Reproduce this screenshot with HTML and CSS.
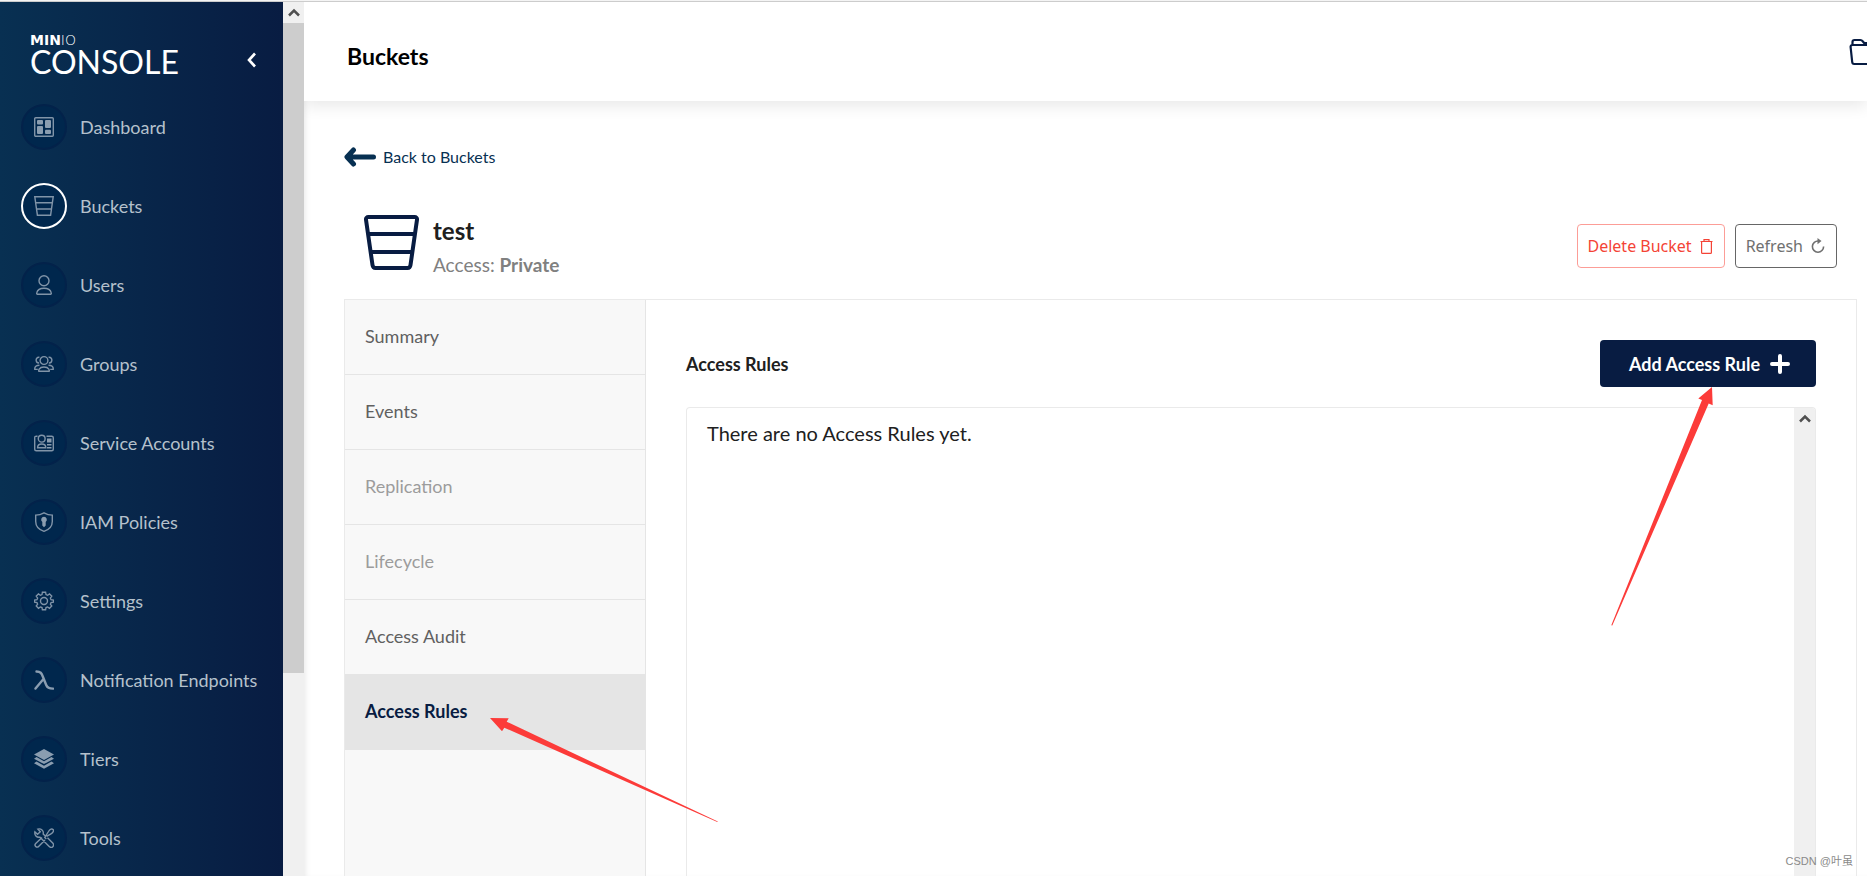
FILE: index.html
```html
<!DOCTYPE html>
<html lang="en">
<head>
<meta charset="utf-8">
<title>MinIO Console</title>
<link rel="stylesheet" href="styles.css">
</head>
<body>
<div class="app">
  <aside class="sidebar">
    <div class="brand">
      <div class="logo">
        <span class="logo-top"><b>MIN</b><span class="logo-thin">IO</span></span>
        <span class="logo-main">CONSOLE</span>
      </div>
      <button class="collapse" aria-label="Collapse menu"><svg width="10" height="16" viewBox="0 0 10 16"><path d="M8 1.500 2 8l6 6.500" fill="none" stroke="#fff" stroke-width="2.600"/></svg></button>
    </div>
    <nav class="menu">
      <a href="#" class="item"><span class="dot"><svg viewBox="0 0 20 20"><rect x=".7" y=".7" width="18.600" height="18.600" rx="1" class="ln"/><g class="fl"><rect x="3" y="3" width="6" height="4.500" rx="1"/><rect x="3" y="9" width="6" height="8" rx="1"/><rect x="11" y="3" width="6" height="8" rx="1"/><rect x="11" y="12.800" width="6" height="4.200" rx="1"/></g></svg></span>Dashboard</a>
      <a href="#" class="item current"><span class="dot"><svg viewBox="0 0 20 20"><path class="ln" d="M.8.800h18.400L16.600 19.200H3.400ZM1.600 6.700h16.800M2.500 13h15"/></svg></span>Buckets</a>
      <a href="#" class="item"><span class="dot"><svg viewBox="0 0 20 20"><circle cx="10" cy="5.700" r="5" class="ln"/><path class="ln" d="M3.200 19.200c-.6 0-.6-.8-.4-1.500.8-3.200 3.800-4.500 7.200-4.500s6.400 1.300 7.200 4.500c.2.700.2 1.500-.4 1.500Z"/></svg></span>Users</a>
      <a href="#" class="item"><span class="dot"><svg viewBox="0 0 20 20"><circle cx="10" cy="6.500" r="3.900" class="ln"/><path class="ln" d="M5 17.300c-.7 0-.5-4.300 5-4.300s5.700 4.300 5 4.300ZM5.400 3.300C3 3 1.900 5 2.200 6.700c.2 1.500 1.400 2.400 2.900 2.300M3.800 15.400H.8c-.3-2.700 1.500-4.200 4.700-4.200M14.600 3.300c2.400-.3 3.500 1.700 3.200 3.400-.2 1.500-1.400 2.400-2.900 2.300M16.200 15.400h3c.3-2.700-1.500-4.200-4.700-4.200"/></svg></span>Groups</a>
      <a href="#" class="item"><span class="dot"><svg viewBox="0 0 20 20"><path class="ln" d="M3.500 3.200H2.300C1.300 3.200.7 3.800.7 4.700v11.600c0 .9.600 1.500 1.600 1.500h15.400c1 0 1.600-.6 1.600-1.500V4.700c0-.9-.6-1.500-1.600-1.500h-5.200"/><circle cx="7.700" cy="5.700" r="3.400" class="ln"/><path class="ln" d="M3.600 14.800c0-5 8.200-5 8.200 0Z"/><path class="fl" d="M13 5.500h4.500v4H13zM13 11h4.500v1.500H13zM13 14h4.500v1.500H13z"/></svg></span>Service Accounts</a>
      <a href="#" class="item"><span class="dot"><svg viewBox="0 0 20 20"><path class="ln" d="M10 .8c2.600 1.500 5.400 2.300 8.300 2.300v6.300c0 4.600-3.400 8.200-8.300 9.900-4.900-1.700-8.300-5.300-8.300-9.900V3.100C4.600 3.100 7.400 2.300 10 .8Z"/><path class="fl" d="M10 4.800a2.900 2.900 0 0 1 1.700 5.200v3.500L10 15.200l-1.700-1.700V10A2.900 2.900 0 0 1 10 4.800Z"/></svg></span>IAM Policies</a>
      <a href="#" class="item"><span class="dot"><svg viewBox="0 0 20 20"><path class="ln" d="M8.300.8h3.400l.4 2.500 1.700.7 2-1.500 2.400 2.400-1.500 2 .7 1.700 2.500.4v2.200l-2.500.4-.7 1.700 1.500 2-2.400 2.400-2-1.500-1.700.7-.4 2.300H8.300l-.4-2.300-1.700-.7-2 1.500-2.400-2.400 1.500-2-.7-1.700L.1 11.200V9l2.500-.4.7-1.700-1.500-2 2.400-2.400 2 1.500 1.700-.7Z" transform="translate(.5 .5) scale(.95)"/><circle cx="10" cy="10" r="3.500" class="ln"/></svg></span>Settings</a>
      <a href="#" class="item"><span class="dot"><svg viewBox="0 0 20 20"><path class="thick" d="M2.500 1.500c4 0 5 1.500 6.500 5.500l3.200 8c1 2.600 2.800 3.600 6.800 3.600M9.500 9 1.500 18.600"/></svg></span>Notification Endpoints</a>
      <a href="#" class="item"><span class="dot"><svg viewBox="0 0 20 20"><path class="fl" d="M10 0 20 5.600 10 11 0 5.600Z"/><path class="fl" d="M2.500 8 0 9.700l10 5.400 10-5.400L17.500 8 10 12.200ZM2.500 12.500 0 14.200l10 5.600 10-5.600-2.500-1.700-7.500 4.200Z"/></svg></span>Tiers</a>
      <a href="#" class="item"><span class="dot"><svg viewBox="0 0 20 20"><path class="ln" d="m8 9.500-6.300 6a2 2 0 0 0 2.900 2.900L11 12M12.300 11l-1.500-1.500 3.700-6C16 .8 18 .5 19 1.500s.5 3-2 4.300l-4.400 2.600M13.500 9.800l5.200 5.300c2.400 2.500-1 5.900-3.500 3.400L6 9.200C2.500 9.800.3 7 .9 3.800l2.600 2.400 2.800-2.500L3.900 1.100C7 .3 10 2.500 9.200 6l1.800 1.800"/></svg></span>Tools</a>
    </nav>
  </aside>
  <div class="scroll side-scroll"><span class="scroll-up"><svg width="12" height="9" viewBox="0 0 12 9"><path d="m1 7.500 5-5 5 5" fill="none" stroke="#505050" stroke-width="2.500"/></svg></span><span class="thumb"></span></div>
  <main class="main">
    <header class="topbar">
      <h1>Buckets</h1>
      <button class="folder" aria-label="Object manager"><svg width="30" height="28" viewBox="0 0 30 28"><path d="M3.500 6.500V4c0-1.200.8-2 2-2h5.800c1.600 0 2 .7 2.800 1.700l1 1.300h10c1 0 1.600.7 1.600 1.600M3.500 7h23c1.200 0 1.700.8 1.600 2l-1.200 15c0 1.200-.8 2-2 2H5.200c-1.200 0-1.900-.8-2-2L1.600 9c-.1-1.200.7-2 1.900-2Z" fill="none" stroke="#081c42" stroke-width="2.200"/></svg></button>
    </header>
    <div class="page">
      <a href="#" class="back"><svg width="32" height="20" viewBox="0 0 32 20"><path d="M9.500 3 3 10l6.500 7M4 10h25.500" fill="none" stroke="#073052" stroke-width="5" stroke-linecap="round" stroke-linejoin="round"/></svg>Back to Buckets</a>
      <section class="bucket-head">
        <svg class="bucket" width="55" height="55" viewBox="0 0 55 55"><path d="M4.500 2h46c1.700 0 2.700 1.200 2.500 2.800L46.500 50c-.3 2-1.300 3-3 3h-32c-1.700 0-2.700-1-3-3L2 4.800C1.800 3.200 2.800 2 4.500 2ZM4 19h47M7 37h41" fill="none" stroke="#081c42" stroke-width="4"/></svg>
        <div class="bucket-info">
          <h2>test</h2>
          <p>Access: <b>Private</b></p>
        </div>
        <button class="btn danger">Delete Bucket <svg width="13" height="15" viewBox="0 0 13 15"><path d="M.5 2.500h12M4 2V.7h5V2M1.600 3v10.500c0 .6.400.9.900.9h8c.5 0 .9-.3.900-.9V3" fill="none" stroke="currentColor" stroke-width="1.200"/></svg></button>
        <button class="btn">Refresh <svg width="14" height="16" viewBox="0 0 14 16"><path d="M7.500 3A5.600 5.600 0 1 0 12.600 8.500" fill="none" stroke="currentColor" stroke-width="1.600"/><path d="m6.500 0 4 3-4 3.200Z" fill="currentColor"/></svg></button>
      </section>
      <section class="panel">
        <nav class="tabs">
          <a href="#">Summary</a>
          <a href="#">Events</a>
          <a href="#" class="off">Replication</a>
          <a href="#" class="off">Lifecycle</a>
          <a href="#">Access Audit</a>
          <a href="#" class="on">Access Rules</a>
        </nav>
        <div class="rules">
          <div class="rules-head">
            <h3>Access Rules</h3>
            <button class="add">Add Access Rule <svg width="20" height="20" viewBox="0 0 20 20"><path d="M10 2v16M2 10h16" stroke="#fff" stroke-width="4" stroke-linecap="round"/></svg></button>
          </div>
          <div class="list">
            <p>There are no Access Rules yet.</p>
            <div class="scroll"><span class="scroll-up"><svg width="12" height="9" viewBox="0 0 12 9"><path d="m1 7.500 5-5 5 5" fill="none" stroke="#505050" stroke-width="2.500"/></svg></span></div>
          </div>
        </div>
      </section>
    </div>
  </main>
</div>
<svg class="mark mark-tab" width="228" height="104" viewBox="0 0 228 104"><path d="M0 0 18.700.3 16.700 3.700 227.800 103.600 227.300 104 14.300 9.700 12 13.300Z" fill="#fc3b39"/></svg>
<svg class="mark mark-add" width="103" height="240" viewBox="0 0 103 240"><path d="M101 1 87.300 12.600 91 14 .3 239.300 1.300 239.600 97.700 17.600 101.700 19.300Z" fill="#fc3b39"/></svg>
<span class="credit">CSDN @叶虽</span>
</body>
</html>
```
FILE: styles.css
```css
* { box-sizing: border-box; }
body {
  margin: 0;
  height: 100vh;
  overflow: hidden;
  position: relative;
  background: #fff;
  color: #202020;
  font-family: Lato, sans-serif;
  font-size: 18px;
}
h1, h2, h3, p { margin: 0; }
a { color: inherit; text-decoration: none; }
button { font: inherit; border: 0; background: none; padding: 0; cursor: pointer; }
svg { display: block; flex: none; }

.app {
  display: flex;
  height: 100vh;
  padding-top: 1px;
  border-top: 1px solid #f4f4f4;
  box-shadow: inset 0 1px #ccc;
}

/* Sidebar */
.sidebar {
  flex: none;
  width: 283px;
  overflow: hidden;
  background: linear-gradient(90deg, #083052, #081c42);
}
.brand {
  display: flex;
  justify-content: space-between;
  align-items: center;
  height: 85px;
  padding: 21px 26px 0 30px;
}
.logo { display: flex; flex-direction: column; color: #fff; }
.logo-top { font: 14px/14px "DejaVu Sans", sans-serif; }
.logo-thin { font-weight: 200; }
.logo-main { font-size: 32px; line-height: 30px; }
.collapse { padding-top: 10px; }
.menu { display: flex; flex-direction: column; }
.item {
  display: flex;
  align-items: center;
  gap: 13px;
  height: 79px;
  padding-left: 21px;
  color: #b5c1cc;
}
.dot {
  display: grid;
  place-items: center;
  width: 46px;
  height: 46px;
  border: 2px solid #03224a;
  border-radius: 50%;
  background: #00274d;
}
.dot svg { width: 20px; height: 20px; }
.current .dot { border-color: #fff; }
.ln { fill: none; stroke: #8094a8; stroke-width: 1.400; }
.fl { fill: #8a9db0; }
.thick { fill: none; stroke: #8a9db0; stroke-width: 2.400; stroke-linecap: round; }

/* Scroll bars */
.scroll {
  flex: none;
  display: flex;
  flex-direction: column;
  width: 21px;
  background: #f0f0f0;
}
.scroll-up { display: grid; place-items: center; height: 21px; }
.thumb { height: 74.400%; background: #cdcdcd; }

/* Main area */
.main { flex: 1; min-width: 0; display: flex; flex-direction: column; box-shadow: inset 5px 0 6px -4px #0000001a; }
.topbar {
  display: flex;
  justify-content: space-between;
  align-items: center;
  height: 99px;
  flex: none;
  padding-left: 43px;
  background: #fff;
  box-shadow: 0 5px 15px #00000017;
  clip-path: inset(0 0 -30px 0);
}
.topbar h1 { padding-top: 8px; font-size: 23px; line-height: 28px; color: #000; }
.folder { width: 18px; overflow: hidden; }
.page { flex: 1; min-height: 0; display: flex; flex-direction: column; padding: 46px 10px 0 40px; }
.back {
  display: flex;
  align-items: center;
  gap: 7px;
  align-self: flex-start;
  font-size: 16px;
  line-height: 20px;
  color: #073052;
}
.bucket-head { display: flex; align-items: center; gap: 10px; height: 132px; padding: 26px 20px 0; }
.bucket-head .bucket { margin: 0 4px 8px 0; }
.bucket-info { flex: 1; padding-top: 4px; color: #808080; }
.bucket-info h2 { font-size: 24px; line-height: 34px; color: #202020; }
.bucket-info p { font-size: 19px; line-height: 34px; }
.btn {
  display: flex;
  align-items: center;
  gap: 8px;
  height: 44px;
  padding: 0 11px 0 10px;
  border: 1px solid #666;
  border-radius: 4px;
  color: #707070;
  font-family: "Noto Sans", sans-serif;
  font-size: 16px;
}
.danger { border-color: #fc9d97; color: #f44336; }

.panel { flex: 1; min-height: 0; display: flex; border: 1px solid #eaeaea; border-bottom: 0; }
.tabs { flex: none; width: 301px; border-right: 1px solid #e5e5e5; background: #f8f8f8; }
.tabs a {
  display: flex;
  align-items: center;
  height: 75px;
  padding: 0 20px 2px;
  border-bottom: 1px solid #e5e5e5;
  color: #606060;
}
.tabs .off { color: #9c9c9c; }
.tabs .on { background: #e5e5e5; color: #081c42; font-weight: 700; }

.rules { flex: 1; min-width: 0; display: flex; flex-direction: column; gap: 20px; padding: 40px 40px 0; }
.rules-head { display: flex; justify-content: space-between; align-items: center; }
.rules-head h3 { font-size: 18px; }
.add {
  display: flex;
  align-items: center;
  gap: 10px;
  height: 47px;
  padding: 0 26px 0 29px;
  border-radius: 4px;
  background: #081c42;
  color: #fff;
  font-weight: 700;
}
.list {
  flex: 1;
  display: flex;
  justify-content: space-between;
  border: 1px solid #eaeaea;
  border-bottom: 0;
  border-radius: 4px 4px 0 0;
  overflow: hidden;
}
.list p { padding: 13px 20px; font-size: 20px; line-height: 24px; }

/* Annotations over the page */
.mark { position: absolute; }
.mark-tab { left: 490px; top: 718px; }
.mark-add { left: 1611px; top: 386px; }
.credit {
  position: absolute;
  right: 14px;
  bottom: 6px;
  color: #8a8a8a;
  font: 11px/18px "Liberation Sans", "Noto Sans CJK SC", sans-serif;
}
```
